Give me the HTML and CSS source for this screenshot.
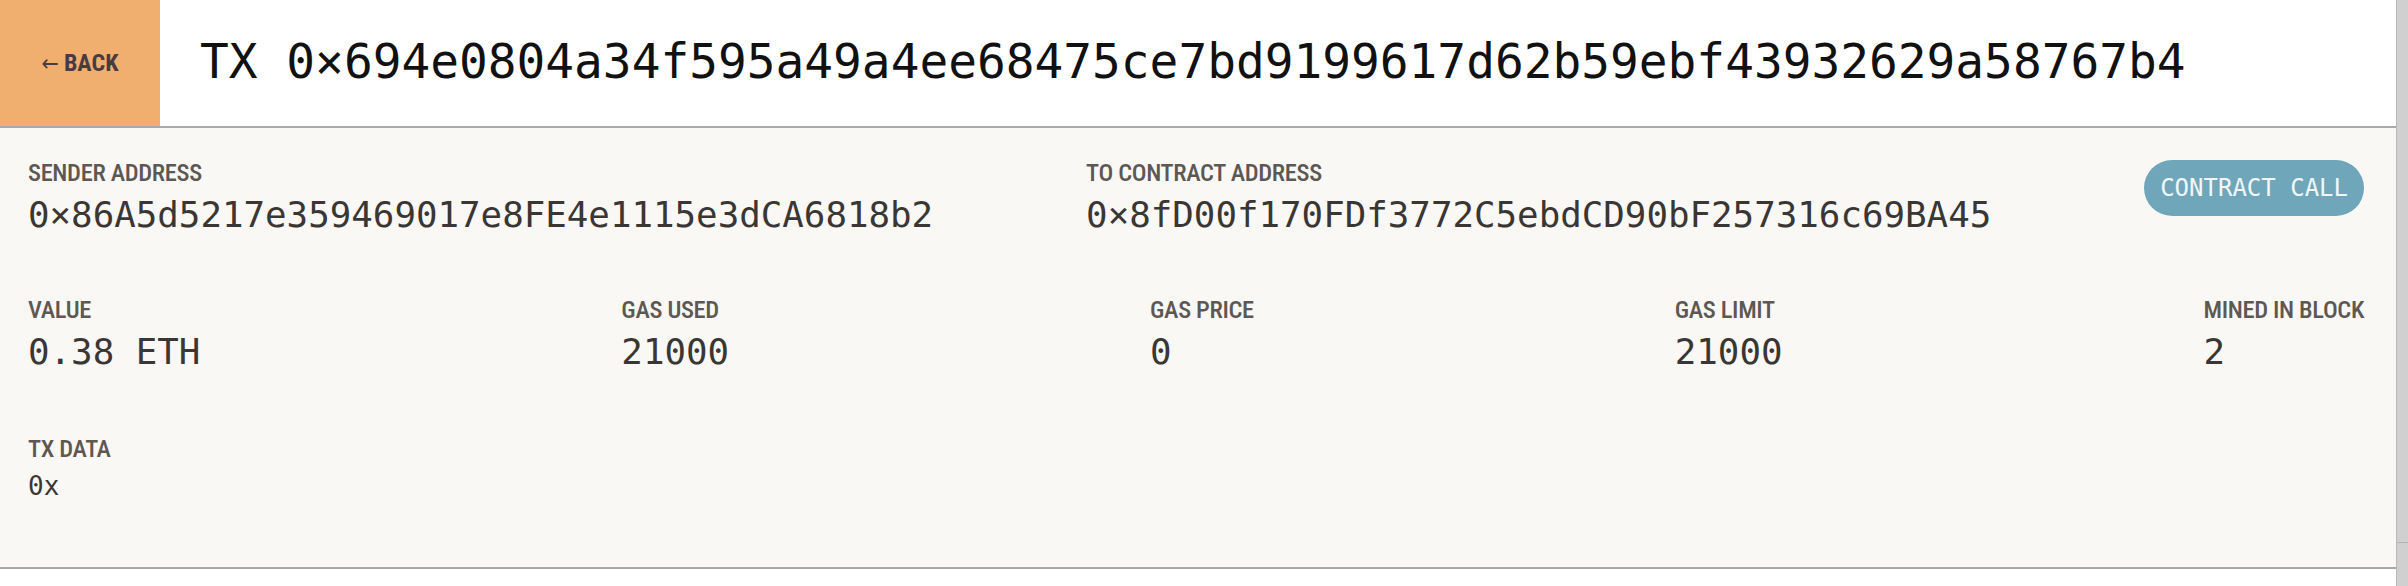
FILE: index.html
```html
<!DOCTYPE html>
<html lang="en">
<head>
<meta charset="utf-8">
<title>Transaction</title>
<link rel="stylesheet" href="styles.css">
</head>
<body>
<div class="page">
  <header class="header">
    <a class="back" href="#"><span class="arrow">←</span> BACK</a>
    <h1 class="title">TX 0×694e0804a34f595a49a4ee68475ce7bd9199617d62b59ebf43932629a58767b4</h1>
  </header>
  <section class="panel">
    <div class="row">
      <div class="field">
        <div class="label">SENDER ADDRESS</div>
        <div class="value">0×86A5d5217e359469017e8FE4e1115e3dCA6818b2</div>
      </div>
      <div class="field">
        <div class="label">TO CONTRACT ADDRESS</div>
        <div class="value">0×8fD00f170FDf3772C5ebdCD90bF257316c69BA45</div>
      </div>
      <div class="tag">CONTRACT CALL</div>
    </div>
    <div class="row">
      <div class="field">
        <div class="label">VALUE</div>
        <div class="value">0.38 ETH</div>
      </div>
      <div class="field">
        <div class="label">GAS USED</div>
        <div class="value">21000</div>
      </div>
      <div class="field">
        <div class="label">GAS PRICE</div>
        <div class="value">0</div>
      </div>
      <div class="field">
        <div class="label">GAS LIMIT</div>
        <div class="value">21000</div>
      </div>
      <div class="field">
        <div class="label">MINED IN BLOCK</div>
        <div class="value">2</div>
      </div>
    </div>
    <div class="row">
      <div class="field">
        <div class="label">TX DATA</div>
        <div class="value data">0x</div>
      </div>
    </div>
  </section>
</div>
<aside class="scrollbar"><div class="thumb"></div></aside>
</body>
</html>
```
FILE: styles.css
```css
html, body {
  margin: 0;
  padding: 0;
  height: 100%;
}
body {
  display: flex;
  background: #ffffff;
  overflow: hidden;
}
.page {
  flex: 1;
  display: flex;
  flex-direction: column;
  min-width: 0;
}
.header {
  display: flex;
  align-items: center;
  height: 126px;
  background: #ffffff;
  border-bottom: 2px solid #a9a9a9;
}
.back {
  width: 160px;
  height: 100%;
  display: flex;
  align-items: center;
  justify-content: center;
  background: #f0af6f;
  color: #4a3b42;
  text-decoration: none;
  font-family: Roboto, sans-serif;
  font-stretch: 75%;
  font-weight: 700;
  font-size: 24px;
  padding-bottom: 1px;
  box-sizing: border-box;
}
.arrow {
  font-family: "DejaVu Sans", sans-serif;
  font-weight: 400;
  font-size: 23px;
  margin-right: 5px;
}
.title {
  margin: 0 0 4px 40px;
  font-family: "DejaVu Sans Mono", monospace;
  font-weight: 400;
  font-size: 47.8px;
  color: #111111;
  white-space: nowrap;
}
.panel {
  background: #f9f8f5;
  border-bottom: 2px solid #a9a9a9;
  padding: 31px 32px 66px 28px;
  display: flex;
  flex-direction: column;
  gap: 60px;
}
.row {
  display: flex;
  justify-content: space-between;
  align-items: flex-start;
}
.row + .row + .row {
  margin-top: 2px;
}
.label {
  font-family: Roboto, sans-serif;
  font-stretch: 75%;
  font-weight: 500;
  font-size: 24.5px;
  letter-spacing: -0.35px;
  line-height: 28px;
  color: #5d5853;
}
.value {
  margin-top: 7px;
  font-family: "DejaVu Sans Mono", monospace;
  font-size: 35.8px;
  line-height: 42px;
  color: #3a3633;
  white-space: nowrap;
}
.value.data {
  font-size: 26px;
  line-height: 30px;
  margin-top: 8px;
}
.tag {
  margin-top: 1px;
  height: 56px;
  padding: 0 16px;
  border-radius: 28px;
  background: #6fa6b9;
  color: #f3f6f7;
  font-family: "DejaVu Sans Mono", monospace;
  font-size: 24px;
  display: flex;
  align-items: center;
}
.scrollbar {
  width: 11px;
  flex: none;
  background: #d0d0d0;
  border-left: 1px solid #b9b9b9;
}
.thumb {
  height: 542px;
  border-bottom: 1px solid #b4b4b4;
}
```
